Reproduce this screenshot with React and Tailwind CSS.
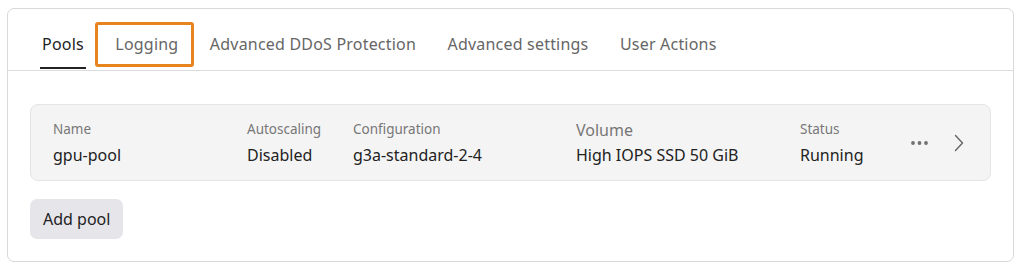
import React from "react";

const tabs = ["Pools", "Logging", "Advanced DDoS Protection", "Advanced settings", "User Actions"];

export default function App() {
  return (
    <div className="w-[1024px] h-[271px] bg-white pt-2 pl-[7px] pr-[10px]" style={{ fontFamily: '"Noto Sans", sans-serif' }}>
      <div className="h-[254px] rounded-[7px] border border-[#d9d9d9] flex flex-col">
        <div className="h-[62px] border-b border-[#dcdcdc] flex items-end pl-[34px] gap-[31.5px]">
          {tabs.map((t, i) => (
            <div key={t} className="relative h-full flex items-center">
              <span className={`text-[16px] tracking-[0.2px] leading-none pt-[8px] ${i === 0 ? "text-[#222]" : "text-[#666]"}`}>{t}</span>
              {i === 0 && <div className="absolute left-[-2px] right-[-2px] bottom-[1px] h-[2px] bg-[#222]" />}
              {i === 1 && <div className="absolute left-[-20px] right-[-16px] top-[13px] bottom-[3px] rounded-[3px] border-[3px] border-[#e8841e]" />}
            </div>
          ))}
        </div>
        <div className="px-[22px] pt-[33px]">
          <div className="h-[77px] rounded-[8px] border border-[#e4e4e4] bg-[#f4f4f4] flex items-center pl-[22px] pr-[26px]">
            <div className="w-[194px]">
              <div className="text-[13.5px] text-[#777] leading-[18px]">Name</div>
              <div className="text-[16px] text-[#222] leading-[22px] mt-[6px]">gpu-pool</div>
            </div>
            <div className="w-[106px]">
              <div className="text-[13.5px] text-[#777] leading-[18px]">Autoscaling</div>
              <div className="text-[16px] text-[#222] leading-[22px] mt-[6px]">Disabled</div>
            </div>
            <div className="w-[223px]">
              <div className="text-[13.5px] text-[#777] leading-[18px]">Configuration</div>
              <div className="text-[16px] text-[#222] leading-[22px] mt-[6px]">g3a-standard-2-4</div>
            </div>
            <div className="w-[224px]">
              <div className="text-[16px] text-[#777] leading-[20px]">Volume</div>
              <div className="text-[16px] text-[#222] leading-[22px] mt-[4px]">High IOPS SSD 50 GiB</div>
            </div>
            <div className="flex-1">
              <div className="text-[13.5px] text-[#777] leading-[18px]">Status</div>
              <div className="text-[16px] text-[#222] leading-[22px] mt-[6px]">Running</div>
            </div>
            <div className="flex items-center gap-[25px]">
              <svg width="19" height="6" viewBox="0 0 19 6">
                <circle cx="3" cy="3" r="1.9" fill="#707070" />
                <circle cx="9.5" cy="3" r="1.9" fill="#707070" />
                <circle cx="16" cy="3" r="1.9" fill="#707070" />
              </svg>
              <svg width="10" height="18" viewBox="0 0 10 18" fill="none">
                <path d="M1.5 1.5 L8.5 9 L1.5 16.5" stroke="#666" strokeWidth="1.4" strokeLinecap="round" strokeLinejoin="round" />
              </svg>
            </div>
          </div>
          <button className="mt-[18px] h-[40px] px-[13px] rounded-[7px] bg-[#e6e5ea] text-[16px] text-[#222]">Add pool</button>
        </div>
      </div>
    </div>
  );
}
